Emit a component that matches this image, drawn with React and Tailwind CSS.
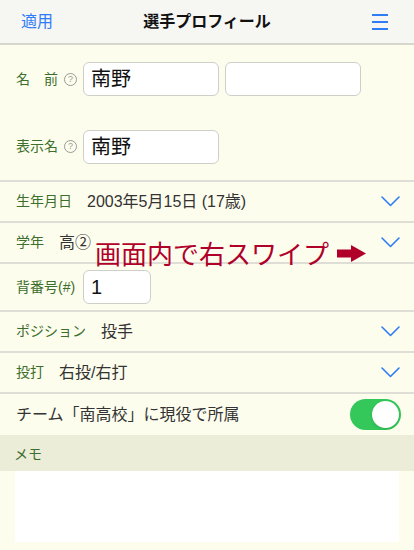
import React, { useState } from 'react';

const font = { fontFamily: '"Liberation Sans", "Noto Sans CJK JP", sans-serif' };

const Chevron = () => (
    <svg width="19" height="11" viewBox="0 0 19 11" fill="none" className="shrink-0">
        <polyline points="1,1 9.5,9.5 18,1" stroke="#2f7df6" strokeWidth="1.6" strokeLinecap="round" strokeLinejoin="round" />
    </svg>
);

const Help = () => (
    <span className="ml-[6px] w-[13px] h-[13px] rounded-full border border-[#9a9a95] text-[#9a9a95] text-[9px] leading-none flex items-center justify-center">?</span>
);

const Label = ({ children }) => (
    <span className="text-[14px] text-[#3c6e2c] whitespace-nowrap">{children}</span>
);

const TextBox = ({ value, width }) => (
    <div className={`${width} h-[34px] bg-white border border-[#cfcfca] rounded-[6px] px-[7px] flex items-center text-[20px] text-[#111]`}>
        {value}
    </div>
);

const SelectRow = ({ label, value, gap }) => (
    <div className="h-[41px] border-b-2 border-[#deded6] flex items-center pl-4 pr-[14px]">
        <Label>{label}</Label>
        <span className={`${gap} text-[16px] text-[#333]`}>{value}</span>
        <div className="flex-1" />
        <Chevron />
    </div>
);

export default function App() {
    const [onTeam, setOnTeam] = useState(true);

    return (
        <div className="w-[414px] h-[550px] overflow-hidden bg-[#fdfdee] relative" style={font}>
            {/* Header */}
            <div className="h-[45px] bg-[#f6f6f2] border-b-2 border-[#d6d6cf] flex items-center px-[21px] relative">
                <span className="text-[16px] text-[#2f7df6]">適用</span>
                <span className="absolute left-0 right-0 text-center text-[16px] font-bold text-[#111] pointer-events-none">選手プロフィール</span>
                <div className="flex-1" />
                <div className="flex flex-col gap-[5px] mr-[5px]">
                    <span className="block w-[16px] h-[2px] bg-[#2f7df6]" />
                    <span className="block w-[16px] h-[2px] bg-[#2f7df6]" />
                    <span className="block w-[16px] h-[2px] bg-[#2f7df6]" />
                </div>
            </div>

            {/* Names */}
            <div className="border-b-2 border-[#deded6]">
                <div className="h-[68px] flex items-center pl-4">
                    <div className="w-[67px] flex items-center">
                        <Label>名　前</Label>
                        <Help />
                    </div>
                    <TextBox value="南野" width="w-[136px]" />
                    <div className="w-[6px]" />
                    <TextBox value="" width="w-[136px]" />
                </div>
                <div className="h-[67px] flex items-center pl-4">
                    <div className="w-[67px] flex items-center">
                        <Label>表示名</Label>
                        <Help />
                    </div>
                    <TextBox value="南野" width="w-[136px]" />
                </div>
            </div>

            <SelectRow label="生年月日" value="2003年5月15日 (17歳)" gap="ml-[15px]" />
            <SelectRow label="学年" value="高②" gap="ml-[15px]" />

            {/* Number */}
            <div className="h-[48px] border-b-2 border-[#deded6] flex items-center pl-4">
                <div className="w-[67px]">
                    <Label>背番号(#)</Label>
                </div>
                <TextBox value="1" width="w-[68px]" />
            </div>

            <SelectRow label="ポジション" value="投手" gap="ml-[15px]" />
            <SelectRow label="投打" value="右投/右打" gap="ml-[15px]" />

            {/* Toggle */}
            <div className="h-[41px] flex items-center pl-4 pr-[13px]">
                <span className="text-[16px] text-[#333]">チーム「南高校」に現役で所属</span>
                <div className="flex-1" />
                <button
                    onClick={() => setOnTeam(!onTeam)}
                    className={`w-[51px] h-[31px] rounded-full p-[2px] flex items-center ${onTeam ? 'bg-[#34c759] justify-end' : 'bg-[#e5e5e5] justify-start'}`}
                >
                    <span className="block w-[27px] h-[27px] rounded-full bg-white shadow" />
                </button>
            </div>

            {/* Memo */}
            <div className="h-[36px] bg-[#ecedd9] flex items-end pl-[14px] pb-[6px]">
                <Label>メモ</Label>
            </div>
            <div className="px-[15px]">
                <div className="h-[71px] bg-white" />
            </div>

            {/* Swipe hint overlay */}
            <div className="absolute left-[95px] top-[240px] flex items-center gap-[8px] pointer-events-none">
                <span className="text-[26px] leading-none text-[#b0002a] whitespace-nowrap" style={{ fontFamily: '"Noto Sans CJK JP", sans-serif' }}>画面内で右スワイプ</span>
                <svg width="29" height="17" viewBox="0 0 29 17">
                    <polygon points="0,4.5 14,4.5 14,0 29,8.5 14,17 14,12.5 0,12.5" fill="#b0002a" />
                </svg>
            </div>
        </div>
    );
}
